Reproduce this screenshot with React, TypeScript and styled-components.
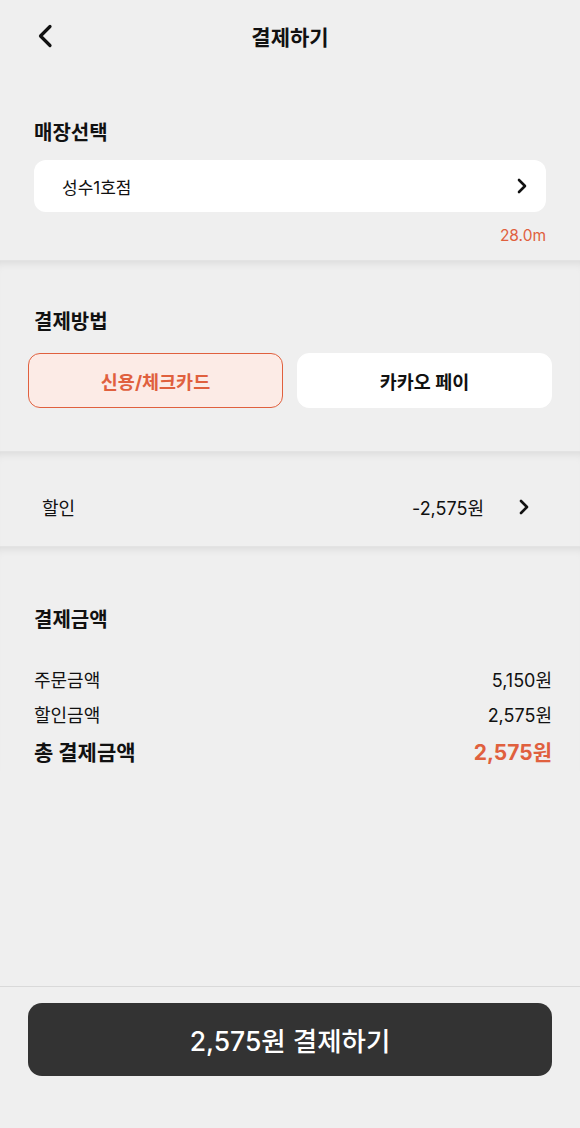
import { FC } from 'react';
import styled, { createGlobalStyle } from 'styled-components';

const GlobalStyle = createGlobalStyle`
    html, body {
        margin: 0;
        padding: 0;
        background: #efefef;
        font-family: Inter, "Noto Sans CJK KR", "Noto Sans", sans-serif;
        color: #111;
    }
    * { box-sizing: border-box; }
`;

const ACCENT = '#e0603e';

const Page = styled.div`
    width: 580px;
    height: 1128px;
    display: flex;
    flex-direction: column;
    background: #efefef;
`;

const Header = styled.header`
    height: 72px;
    display: flex;
    align-items: center;
    justify-content: center;
    position: relative;
`;

const BackButton = styled.button`
    position: absolute;
    left: 29px;
    top: 20px;
    width: 32px;
    height: 32px;
    border: none;
    background: none;
    padding: 0;
    display: flex;
    align-items: center;
    justify-content: center;
`;

const HeaderTitle = styled.h1`
    margin: 0;
    font-size: 21px;
    font-weight: 700;
`;

const Section = styled.section<{ $shadow?: boolean; $pad: string }>`
    padding: ${p => p.$pad};
    ${p => p.$shadow && `
        border-top: 1px solid #e3e3e3;
        box-shadow: inset 0 8px 8px -6px rgba(0, 0, 0, 0.09);
    `}
`;

const SectionTitle = styled.h2`
    margin: 0;
    padding-left: 6px;
    font-size: 20px;
    font-weight: 700;
    line-height: 28px;
`;

const StoreCard = styled.div`
    margin: 13px 6px 0;
    height: 52px;
    border-radius: 12px;
    background: #fff;
    display: flex;
    align-items: center;
    justify-content: space-between;
    padding: 0 18px 0 28px;
    font-size: 17px;
`;

const Distance = styled.div`
    margin-top: 14px;
    padding-right: 6px;
    text-align: right;
    font-size: 15.5px;
    color: ${ACCENT};
`;

const MethodRow = styled.div`
    margin-top: 17px;
    display: grid;
    grid-template-columns: 1fr 1fr;
    gap: 14px;
`;

const MethodButton = styled.button<{ $active?: boolean }>`
    height: 55px;
    border-radius: 12px;
    font-family: inherit;
    font-size: 18.5px;
    font-weight: 700;
    border: 1.5px solid ${p => (p.$active ? ACCENT : '#fff')};
    background: ${p => (p.$active ? '#fcebe6' : '#fff')};
    color: ${p => (p.$active ? ACCENT : '#111')};
`;

const DiscountRow = styled.div`
    height: 94px;
    display: flex;
    align-items: center;
    padding: 15px 50px 0 42px;
    font-size: 18px;
`;

const DiscountLabel = styled.span`
    flex: 1;
`;

const DiscountValue = styled.span`
    margin-right: 34px;
`;

const SummaryList = styled.div`
    margin-top: 27px;
    padding-left: 6px;
    display: flex;
    flex-direction: column;
`;

const SummaryRow = styled.div<{ $total?: boolean }>`
    display: flex;
    justify-content: space-between;
    align-items: center;
    height: ${p => (p.$total ? '40px' : '35px')};
    font-size: ${p => (p.$total ? '21px' : '18px')};
    font-weight: ${p => (p.$total ? 700 : 400)};
`;

const TotalValue = styled.span`
    color: ${ACCENT};
`;

const Spacer = styled.div`
    flex: 1;
`;

const Footer = styled.footer`
    border-top: 1px solid #d9d9d9;
    padding: 16px 28px 52px;
`;

const PayButton = styled.button`
    width: 100%;
    height: 73px;
    border: none;
    border-radius: 14px;
    background: #333;
    color: #fff;
    font-family: inherit;
    font-size: 26.5px;
    font-weight: 500;
`;

const ChevronRight: FC = () => (
    <svg width="12" height="16" viewBox="0 0 12 16" fill="none" stroke="#111" strokeWidth="2.6" strokeLinecap="round" strokeLinejoin="round">
        <path d="M3 2l6 6-6 6" />
    </svg>
);

const ChevronLeft: FC = () => (
    <svg width="18" height="24" viewBox="0 0 18 24" fill="none" stroke="#111" strokeWidth="3.2" strokeLinecap="round" strokeLinejoin="round">
        <path d="M14 2.5L4.5 12l9.5 9.5" />
    </svg>
);

const App: FC = () => {
    return (
        <Page>
            <GlobalStyle />
            <Section $pad="0">
                <Header>
                    <BackButton>
                        <ChevronLeft />
                    </BackButton>
                    <HeaderTitle>결제하기</HeaderTitle>
                </Header>
                <Section $pad="47px 28px 15px">
                    <SectionTitle>매장선택</SectionTitle>
                    <StoreCard>
                        <span>성수1호점</span>
                        <ChevronRight />
                    </StoreCard>
                    <Distance>28.0m</Distance>
                </Section>
            </Section>
            <Section $shadow $pad="47px 28px 43px">
                <SectionTitle>결제방법</SectionTitle>
                <MethodRow>
                    <MethodButton $active>신용/체크카드</MethodButton>
                    <MethodButton>카카오 페이</MethodButton>
                </MethodRow>
            </Section>
            <Section $shadow $pad="0">
                <DiscountRow>
                    <DiscountLabel>할인</DiscountLabel>
                    <DiscountValue>-2,575원</DiscountValue>
                    <ChevronRight />
                </DiscountRow>
            </Section>
            <Section $shadow $pad="59px 28px 0">
                <SectionTitle>결제금액</SectionTitle>
                <SummaryList>
                    <SummaryRow>
                        <span>주문금액</span>
                        <span>5,150원</span>
                    </SummaryRow>
                    <SummaryRow>
                        <span>할인금액</span>
                        <span>2,575원</span>
                    </SummaryRow>
                    <SummaryRow $total>
                        <span>총 결제금액</span>
                        <TotalValue>2,575원</TotalValue>
                    </SummaryRow>
                </SummaryList>
            </Section>
            <Spacer />
            <Footer>
                <PayButton>2,575원 결제하기</PayButton>
            </Footer>
        </Page>
    );
};

export default App;
